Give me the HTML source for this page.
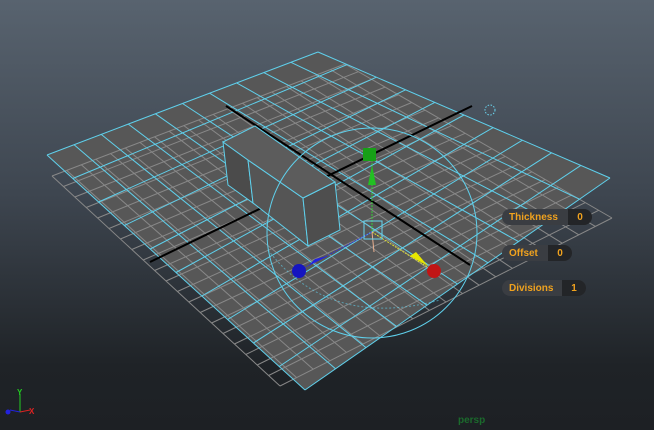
<!DOCTYPE html><html><head><style>
html,body{margin:0;padding:0}
body{width:654px;height:430px;overflow:hidden;background:linear-gradient(#58636f 0%,#3e4650 45%,#1f2327 85%,#1d2024 100%);position:relative;font-family:"Liberation Sans",sans-serif}
svg{position:absolute;left:0;top:0}
.pill{position:absolute;height:16px;border-radius:8px;background:#3a3d42;color:#f0a21e;font-weight:bold;font-size:10px;line-height:17px}
.pill b{position:absolute;left:7px;top:0}
.pill i{position:absolute;top:0;height:16px;border-radius:0 8px 8px 0;background:#232528;font-style:normal;text-align:center;line-height:17px}
</style></head><body>
<svg id="s" width="654" height="430" viewBox="0 0 654 430"></svg>
<div class="pill" style="left:502px;top:209px;width:90px"><b>Thickness</b><i style="left:66px;width:24px">0</i></div>
<div class="pill" style="left:502px;top:245px;width:70px"><b>Offset</b><i style="left:46px;width:24px">0</i></div>
<div class="pill" style="left:502px;top:280px;width:84px"><b>Divisions</b><i style="left:60px;width:24px">1</i></div>
<div style="position:absolute;left:458px;top:415px;color:#1b6a2c;font-weight:bold;font-size:10px">persp</div>
<script>
var s=document.getElementById('s'),h='';
function L(a,b,c,w,d){h+='<line x1="'+a[0]+'" y1="'+a[1]+'" x2="'+b[0]+'" y2="'+b[1]+'" stroke="'+c+'" stroke-width="'+(w||1)+'"'+(d?' stroke-dasharray="'+d+'"':'')+'/>';}
function lerp(a,b,t){return[a[0]+(b[0]-a[0])*t,a[1]+(b[1]-a[1])*t];}
function P(pts,f,st){h+='<polygon points="'+pts.map(p=>p.join(',')).join(' ')+'" fill="'+f+'"'+(st?' stroke="'+st+'"':'')+'/>';}
function grid(A,B,C,D,n,col){for(var i=0;i<=n;i++){var t=i/n;L(lerp(A,B,t),lerp(D,C,t),col);L(lerp(A,D,t),lerp(B,C,t),col);}}
var T=[318,52],R=[610,178],B=[305,390],Lf=[47,155];
P([T,R,B,Lf],'#575757');
grid([345,64],[612,218],[280,386],[52,176],20,'#888');
grid(T,R,B,Lf,10,'#5fd0ec');
L([226,106],[470,265],'#000',2);
L([472,106],[150,262],'#000',2);
var a=[223,142],b=[248,160],c=[303,198],d=[335,182],e=[255,126],
    a2=[228,185],b2=[253,203],c2=[308,246],d2=[340,230];
P([a,b,b2,a2],'#4b4b4b','#5fd0ec');
P([b,c,c2,b2],'#555','#5fd0ec');
P([c,d,d2,c2],'#4e4e4e','#5fd0ec');
P([a,e,d,c,b],'#5c5c5c','#5fd0ec');
h+='<ellipse cx="372" cy="233" rx="105" ry="105" fill="none" stroke="#5fd0ec" stroke-width="1"/>';
h+='<path d="M268 250 Q330 330 440 300" fill="none" stroke="#5fd0ec" stroke-opacity="0.6" stroke-dasharray="2,2"/>';
L([372,160],[372,232],'#3c3',1,'2,1');
L([372,232],[300,270],'#33c',1,'2,1');
L([372,232],[432,270],'#dd3',1,'2,1');
L([372,232],[374,252],'#e9b090');
h+='<rect x="364" y="221" width="18" height="18" fill="none" stroke="#6ad6f0"/>';
h+='<polygon points="368,185 376,185 372,165" fill="#22c022"/>';
h+='<rect x="363" y="148" width="13" height="13" fill="#17a017"/>';
h+='<polygon points="308,266 315,259 328,256" fill="#2222e0"/>';
h+='<circle cx="299" cy="271" r="7" fill="#1515c0"/>';
h+='<polygon points="410,256 416,252 428,266" fill="#e6e600"/>';
h+='<circle cx="434" cy="271" r="7" fill="#c01515"/>';
h+='<circle cx="490" cy="110" r="5" fill="none" stroke="#6ad6f0" stroke-dasharray="1.5,1.5"/>';
L([20,412],[20,394],'#2c2');L([20,412],[30,410],'#d22');L([20,412],[10,410],'#22d');
h+='<text x="17" y="395" font-size="8" fill="#2c2" font-weight="bold">Y</text><text x="29" y="414" font-size="8" fill="#d22" font-weight="bold">X</text>';
h+='<circle cx="8" cy="412" r="2.5" fill="#22d"/>';
s.innerHTML=h;
</script>
</body></html>
